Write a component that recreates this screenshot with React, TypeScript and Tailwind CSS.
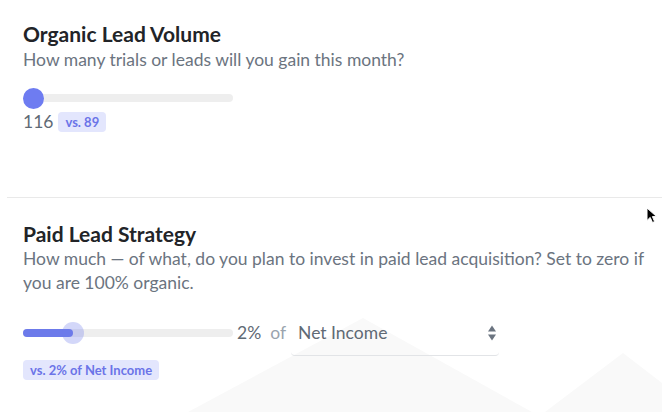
import type { ReactNode } from 'react';

function Badge({ children }: { children: ReactNode }) {
  return (
    <span className="inline-flex h-5 items-center rounded-[4px] bg-[#e3e6fd] px-[7px] text-[13px] font-bold leading-none text-[#6b74e8]">
      {children}
    </span>
  );
}

function Slider({ percent, halo }: { percent: number; halo?: boolean }) {
  return (
    <div className="relative flex h-[22px] w-[210px] items-center">
      <div className="h-2 w-full rounded-full bg-[#eeeeee]" />
      {percent > 0 && (
        <div
          className="absolute left-0 h-2 rounded-full bg-[#6c7aea]"
          style={{ width: `${percent}%` }}
        />
      )}
      {halo ? (
        <div
          className="absolute h-[22px] w-[22px] -translate-x-1/2 rounded-full bg-[#6c7aea]/30"
          style={{ left: `${percent}%` }}
        />
      ) : (
        <div className="absolute left-0 h-[21px] w-[21px] rounded-full bg-[#6e7cf1]" />
      )}
    </div>
  );
}

function SortArrows() {
  return (
    <svg width="8" height="16" viewBox="0 0 8 16" className="text-[#6b7480]">
      <polygon points="0,6.5 4,0.5 8,6.5" fill="currentColor" />
      <polygon points="0,9.5 4,15.5 8,9.5" fill="currentColor" />
    </svg>
  );
}

export default function App() {
  return (
    <div className="relative min-h-[412px] overflow-hidden bg-white font-['Lato','Open_Sans',sans-serif] text-[#222]">
      {/* faint mountains behind the content */}
      <svg
        className="pointer-events-none absolute bottom-0 left-0"
        width="662"
        height="100"
        viewBox="0 312 662 100"
      >
        <polygon points="188,412 363,318 532,412" fill="#f9f9f9" />
        <polygon points="545,412 623,353 700,412" fill="#f9f9f9" />
      </svg>

      <section className="relative pl-[23px] pr-3 pt-[22px] pb-[63px]">
        <h2 className="text-[21px] font-bold leading-6 text-[#222428]">Organic Lead Volume</h2>
        <p className="mt-[2px] text-[17.5px] leading-6 text-[#6b7480]">
          How many trials or leads will you gain this month?
        </p>
        <div className="mt-[15px]">
          <Slider percent={0} />
        </div>
        <div className="mt-px flex h-6 items-center gap-[5px]">
          <span className="text-[17.5px] text-[#5f6a75]">116</span>
          <Badge>vs. 89</Badge>
        </div>
      </section>

      <div className="ml-[7px] border-t border-[#e9e9e9]" />

      <section className="relative pl-[23px] pr-3 pt-6">
        <h2 className="text-[21px] font-bold leading-6 text-[#222428]">Paid Lead Strategy</h2>
        <p className="mt-px text-[17.5px] leading-6 text-[#6b7480]">
          How much — of what, do you plan to invest in paid lead acquisition? Set to zero if you are
          100% organic.
        </p>
        <div className="mt-[26px] flex items-start">
          <div className="flex h-6 items-center">
            <Slider percent={24} halo />
          </div>
          <span className="ml-1 text-[17.5px] leading-6 text-[#5f6a75]">2%</span>
          <span className="ml-[9px] text-[17.5px] leading-6 text-[#9aa4ae]">of</span>
          <div className="ml-[5px] flex w-[208px] items-center justify-between rounded-[4px] border-b border-[#e2e4e7] pb-[10px] pl-[7px] pr-[3px]">
            <span className="text-[17.5px] leading-6 text-[#5f6a75]">Net Income</span>
            <SortArrows />
          </div>
        </div>
        <div className="mt-1 flex">
          <Badge>vs. 2% of Net Income</Badge>
        </div>
      </section>

      {/* mouse pointer */}
      <svg className="absolute left-[646px] top-[207px]" width="12" height="17" viewBox="0 0 12 17">
        <path
          d="M1 1 L1 13.5 L4.2 10.4 L6.5 15.5 L8.6 14.6 L6.4 9.6 L10.6 9.6 Z"
          fill="#000"
          stroke="#fff"
          strokeWidth="1"
        />
      </svg>
    </div>
  );
}
